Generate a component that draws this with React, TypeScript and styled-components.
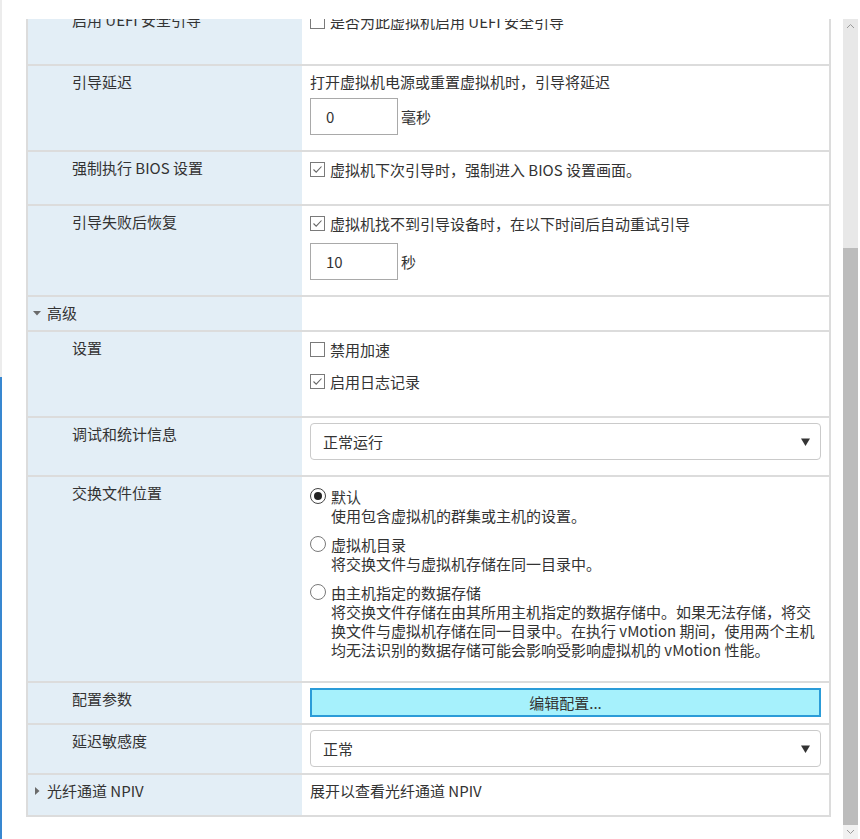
import styled, { createGlobalStyle } from "styled-components";

const GlobalStyle = createGlobalStyle`
  * { box-sizing: border-box; }
  html, body, #root { height: 100%; }
  body {
    margin: 0;
    background: #fff;
    color: #333;
    font-family: "Noto Sans CJK SC", "Liberation Sans", sans-serif;
    font-size: 15px;
    line-height: 19px;
  }
`;

const Screen = styled.div`
  display: flex;
  height: 100vh;
  overflow: hidden;
`;

const Edge = styled.div`
  flex: 0 0 2px;
  display: flex;
  flex-direction: column;
`;
const EdgeTop = styled.div`
  height: 377px;
  background: #ececec;
`;
const EdgeBottom = styled.div`
  flex: 1;
  background: #3887d0;
`;

const Main = styled.div`
  flex: 1;
  min-width: 0;
  display: flex;
  padding-top: 19px;
`;

// scrolled to the end: content overflows (and is clipped) at the top
const Viewport = styled.div`
  flex: 1;
  display: flex;
  flex-direction: column;
  justify-content: flex-end;
  overflow: hidden;
  padding: 0 12px 22px 24px;
`;

const Table = styled.div`
  flex-shrink: 0;
  border: 2px solid #dcdcdc;
  border-top: none;
`;

const Row = styled.div`
  display: grid;
  grid-template-columns: 274px 1fr;
  border-top: 2px solid #dcdcdc;
`;

const Label = styled.div<{ $heading?: boolean }>`
  background: #e3eef6;
  display: flex;
  align-items: flex-start;
  gap: 6px;
  padding: ${(p) => (p.$heading ? "6px 8px 8px 5px" : "6px 8px 8px 44px")};
`;

const CaretBox = styled.span`
  display: flex;
  align-items: center;
  height: 19px;
`;

type Pad = "text" | "field" | "tight" | "tall";
const pads: Record<Pad, string> = {
  text: "6px 8px 15px",
  field: "5px 8px 15px",
  tight: "5px 8px 6px",
  tall: "6px 8px 23px",
};

const Value = styled.div<{ $pad?: Pad }>`
  background: #fff;
  padding: ${(p) => pads[p.$pad ?? "text"]};
  min-width: 0;
`;

const CheckList = styled.div<{ $gap?: number }>`
  display: flex;
  flex-direction: column;
  gap: ${(p) => p.$gap ?? 12}px;
  padding: 1px 0 10px;
`;

const CheckItem = styled.label`
  display: flex;
  align-items: center;
  gap: 5px;
  height: 20px;
`;

const Box = styled.span`
  flex: 0 0 15px;
  height: 15px;
  border: 1px solid #7a7a7a;
  background: #fff;
  display: flex;
  align-items: center;
  justify-content: center;
`;

const Field = styled.div<{ $top?: number }>`
  display: flex;
  align-items: center;
  gap: 3px;
  margin-top: ${(p) => p.$top ?? 0}px;
`;

const NumberBox = styled.input`
  width: 88px;
  height: 37px;
  border: 1px solid #a9a9a9;
  border-radius: 0;
  padding: 0 15px;
  font: inherit;
  color: #333;
  outline: none;
`;

const SelectBox = styled.div`
  height: 37px;
  display: flex;
  align-items: center;
  justify-content: space-between;
  padding: 0 10px 0 12px;
  border: 1px solid #cacaca;
  border-radius: 4px;
  background: #fff;
`;

const EditButton = styled.button`
  display: block;
  width: 100%;
  height: 29px;
  background: #a6f1fc;
  border: 2px solid #2b9cd8;
  font: inherit;
  color: #333;
  padding: 0;
`;

const RadioList = styled.div`
  display: flex;
  flex-direction: column;
  gap: 10px;
  padding: 4px 0 7px;
`;

const RadioItem = styled.div`
  display: grid;
  grid-template-columns: 16px 1fr;
  column-gap: 5px;
`;

const RadioMark = styled.span<{ $checked?: boolean }>`
  width: 16px;
  height: 16px;
  margin-top: 1px;
  border-radius: 50%;
  border: 1px solid ${(p) => (p.$checked ? "#444" : "#7a7a7a")};
  display: flex;
  align-items: center;
  justify-content: center;
  &::after {
    content: "";
    width: 8px;
    height: 8px;
    border-radius: 50%;
    background: ${(p) => (p.$checked ? "#222" : "transparent")};
  }
`;

const RadioHint = styled.div`
  grid-column: 2;
`;

const Scrollbar = styled.div`
  flex: 0 0 15px;
  margin-right: 2px;
  display: flex;
  flex-direction: column;
  background: #e8e8e8;
`;

const ScrollButton = styled.div<{ $light?: boolean }>`
  height: 14px;
  display: flex;
  align-items: center;
  justify-content: center;
  background: ${(p) => (p.$light ? "#f1f1f1" : "transparent")};
`;

const ScrollTrack = styled.div`
  flex: 1;
  display: flex;
  flex-direction: column;
  padding-top: 215px;
`;

const ScrollThumb = styled.div`
  flex: 1;
  background: #bcbcbc;
`;

const Caret = ({ open }: { open?: boolean }) => (
  <CaretBox>
    <svg width="8" height="8" viewBox="0 0 8 8">
      {open ? (
        <polygon points="0,2 8,2 4,6.5" fill="#6b6b6b" />
      ) : (
        <polygon points="2,0 6.5,4 2,8" fill="#6b6b6b" />
      )}
    </svg>
  </CaretBox>
);

const Check = ({ checked, children }: { checked?: boolean; children: React.ReactNode }) => (
  <CheckItem>
    <Box>
      {checked && (
        <svg width="13" height="13" viewBox="0 0 13 13">
          <polyline points="2.5,6.5 5.2,9.2 10.5,3.5" fill="none" stroke="#666" strokeWidth="1.1" />
        </svg>
      )}
    </Box>
    <span>{children}</span>
  </CheckItem>
);

const Select = ({ value }: { value: string }) => (
  <SelectBox role="combobox">
    <span>{value}</span>
    <svg width="9" height="8" viewBox="0 0 9 8">
      <polygon points="0,0.5 9,0.5 4.5,8" fill="#333" />
    </svg>
  </SelectBox>
);

const Radio = ({ checked, title, hint }: { checked?: boolean; title: string; hint: string }) => (
  <RadioItem>
    <RadioMark $checked={checked} />
    <div>{title}</div>
    <RadioHint>{hint}</RadioHint>
  </RadioItem>
);

export default function App() {
  return (
    <>
      <GlobalStyle />
      <Screen>
        <Edge>
          <EdgeTop />
          <EdgeBottom />
        </Edge>
        <Main>
          <Viewport>
            <Table>
              <Row>
                <Label $heading>
                  <Caret />
                  <span>加密</span>
                </Label>
                <Value>展开以查看加密设置</Value>
              </Row>
              <Row>
                <Label $heading>
                  <Caret />
                  <span>电源管理</span>
                </Label>
                <Value>展开以查看电源管理设置</Value>
              </Row>
              <Row>
                <Label $heading>
                  <Caret />
                  <span>VMware Tools</span>
                </Label>
                <Value>展开以查看 VMware Tools 设置</Value>
              </Row>
              <Row>
                <Label $heading>
                  <Caret open />
                  <span>引导选项</span>
                </Label>
                <Value />
              </Row>
              <Row>
                <Label>固件</Label>
                <Value $pad="field">
                  <Select value="EFI (推荐)" />
                </Value>
              </Row>
              <Row>
                <Label>启用 UEFI 安全引导</Label>
                <Value $pad="tall">
                  <CheckList>
                    <Check>是否为此虚拟机启用 UEFI 安全引导</Check>
                  </CheckList>
                </Value>
              </Row>
              <Row>
                <Label>引导延迟</Label>
                <Value>
                  <div>打开虚拟机电源或重置虚拟机时，引导将延迟</div>
                  <Field $top={7}>
                    <NumberBox defaultValue="0" />
                    <span>毫秒</span>
                  </Field>
                </Value>
              </Row>
              <Row>
                <Label>强制执行 BIOS 设置</Label>
                <Value>
                  <CheckList>
                    <Check checked>虚拟机下次引导时，强制进入 BIOS 设置画面。</Check>
                  </CheckList>
                </Value>
              </Row>
              <Row>
                <Label>引导失败后恢复</Label>
                <Value>
                  <CheckList>
                    <Check checked>虚拟机找不到引导设备时，在以下时间后自动重试引导</Check>
                  </CheckList>
                  <Field>
                    <NumberBox defaultValue="10" />
                    <span>秒</span>
                  </Field>
                </Value>
              </Row>
              <Row>
                <Label $heading>
                  <Caret open />
                  <span>高级</span>
                </Label>
                <Value />
              </Row>
              <Row>
                <Label>设置</Label>
                <Value>
                  <CheckList>
                    <Check>禁用加速</Check>
                    <Check checked>启用日志记录</Check>
                  </CheckList>
                </Value>
              </Row>
              <Row>
                <Label>调试和统计信息</Label>
                <Value $pad="field">
                  <Select value="正常运行" />
                </Value>
              </Row>
              <Row>
                <Label>交换文件位置</Label>
                <Value>
                  <RadioList>
                    <Radio checked title="默认" hint="使用包含虚拟机的群集或主机的设置。" />
                    <Radio title="虚拟机目录" hint="将交换文件与虚拟机存储在同一目录中。" />
                    <Radio
                      title="由主机指定的数据存储"
                      hint="将交换文件存储在由其所用主机指定的数据存储中。如果无法存储，将交换文件与虚拟机存储在同一目录中。在执行 vMotion 期间，使用两个主机均无法识别的数据存储可能会影响受影响虚拟机的 vMotion 性能。"
                    />
                  </RadioList>
                </Value>
              </Row>
              <Row>
                <Label>配置参数</Label>
                <Value $pad="tight">
                  <EditButton>编辑配置...</EditButton>
                </Value>
              </Row>
              <Row>
                <Label>延迟敏感度</Label>
                <Value $pad="tight">
                  <Select value="正常" />
                </Value>
              </Row>
              <Row>
                <Label $heading>
                  <Caret />
                  <span>光纤通道 NPIV</span>
                </Label>
                <Value>展开以查看光纤通道 NPIV</Value>
              </Row>
            </Table>
          </Viewport>
          <Scrollbar>
            <ScrollButton>
              <svg width="9" height="6" viewBox="0 0 9 6">
                <polyline points="1,5 4.5,1.5 8,5" fill="none" stroke="#9a9a9a" strokeWidth="1" />
              </svg>
            </ScrollButton>
            <ScrollTrack>
              <ScrollThumb />
            </ScrollTrack>
            <ScrollButton $light>
              <svg width="9" height="6" viewBox="0 0 9 6">
                <polyline points="1,1 4.5,4.5 8,1" fill="none" stroke="#9a9a9a" strokeWidth="1" />
              </svg>
            </ScrollButton>
          </Scrollbar>
        </Main>
      </Screen>
    </>
  );
}
